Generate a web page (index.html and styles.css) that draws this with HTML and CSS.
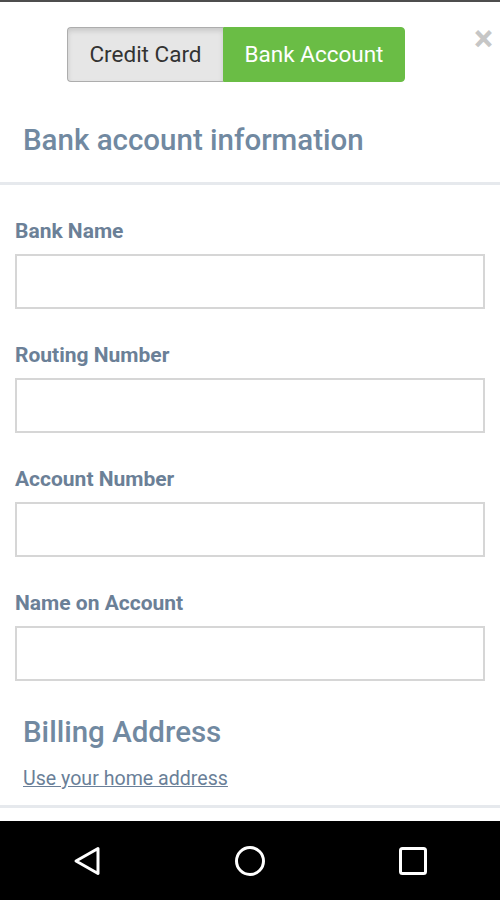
FILE: index.html
```html
<!DOCTYPE html>
<html>
<head>
<meta charset="utf-8">
<link rel="stylesheet" href="styles.css">
</head>
<body>
<div class="screen">
  <div class="topline"></div>
  <div class="header">
    <div class="segmented">
      <button class="seg seg-off">Credit Card</button>
      <button class="seg seg-on">Bank Account</button>
    </div>
    <span class="close">&times;</span>
  </div>
  <h2 class="section-title first">Bank account information</h2>
  <div class="divider"></div>
  <form class="form">
    <div class="field">
      <label class="label">Bank Name</label>
      <input class="input" type="text">
    </div>
    <div class="field">
      <label class="label">Routing Number</label>
      <input class="input" type="text">
    </div>
    <div class="field">
      <label class="label">Account Number</label>
      <input class="input" type="text">
    </div>
    <div class="field">
      <label class="label">Name on Account</label>
      <input class="input" type="text">
    </div>
  </form>
  <h2 class="section-title billing">Billing Address</h2>
  <a class="link" href="#">Use your home address</a>
  <div class="divider bottom"></div>
  <div class="spacer"></div>
  <nav class="navbar">
    <svg class="nav-icon" width="30" height="32" viewBox="0 0 30 32">
      <path d="M26 3.5 L4 16 L26 28.5 Z" fill="none" stroke="#fff" stroke-width="3" stroke-linejoin="round"/>
    </svg>
    <svg class="nav-icon" width="32" height="32" viewBox="0 0 32 32">
      <circle cx="16" cy="16" r="13.5" fill="none" stroke="#fff" stroke-width="3"/>
    </svg>
    <svg class="nav-icon" width="30" height="30" viewBox="0 0 30 30">
      <rect x="2.5" y="2.5" width="25" height="25" rx="2" fill="none" stroke="#fff" stroke-width="3"/>
    </svg>
  </nav>
</div>
</body>
</html>
```

FILE: styles.css
```css
* { box-sizing: border-box; }
html, body { margin: 0; padding: 0; background: #fff; }
body { font-family: Roboto, "Liberation Sans", sans-serif; }
.screen { width: 500px; height: 900px; display: flex; flex-direction: column; }
.topline { height: 2px; background: #4d4d4d; flex: none; }
.header { display: flex; align-items: flex-start; padding: 25px 7px 0 67px; }
.segmented { display: flex; height: 55px; }
.seg {
  font-family: Roboto, "Liberation Sans", sans-serif;
  font-size: 22.5px; line-height: 1; margin: 0; cursor: pointer;
}
.seg-off {
  width: 156px; background: #e6e6e6; color: #333;
  border: 1px solid #adadad; border-right: none;
  border-radius: 4px 0 0 4px;
  box-shadow: inset 0 3px 5px rgba(0,0,0,0.125);
}
.seg-on {
  width: 182px; background: #6abd45; color: #fff;
  border: 1px solid #6abd45; border-radius: 0 4px 4px 0;
}
.close {
  margin-left: auto; color: #c6c6c6; font-size: 36px; font-weight: 700;
  line-height: 1; margin-top: -6px;
}
.section-title {
  margin: 0; padding: 0 23px; color: #7189a1;
  font-size: 29.5px; font-weight: 500; line-height: 34px;
}
.section-title.first { margin-top: 41px; }
.divider { height: 3px; background: #e6e9ed; margin-top: 25px; flex: none; }
.form { display: flex; flex-direction: column; gap: 35px; padding: 35px 15px 0; }
.field { display: flex; flex-direction: column; gap: 12px; }
.label { color: #6b8097; font-size: 21px; font-weight: 700; line-height: 22px; }
.input {
  height: 55px; width: 100%; border: 2px solid #d6d6d6; background: #fff;
  margin: 0; outline: none;
}
.section-title.billing { margin-top: 34px; }
.link {
  display: block; margin: 19px 23px 0; color: #6a7f98; font-size: 19.6px;
  line-height: 22px; text-decoration: underline;
}
.divider.bottom { margin-top: 15px; }
.spacer { flex: 1; }
.navbar {
  height: 79px; background: #000; display: flex; align-items: center;
  justify-content: space-between; padding: 0 72px 0 72px; flex: none;
}
```
